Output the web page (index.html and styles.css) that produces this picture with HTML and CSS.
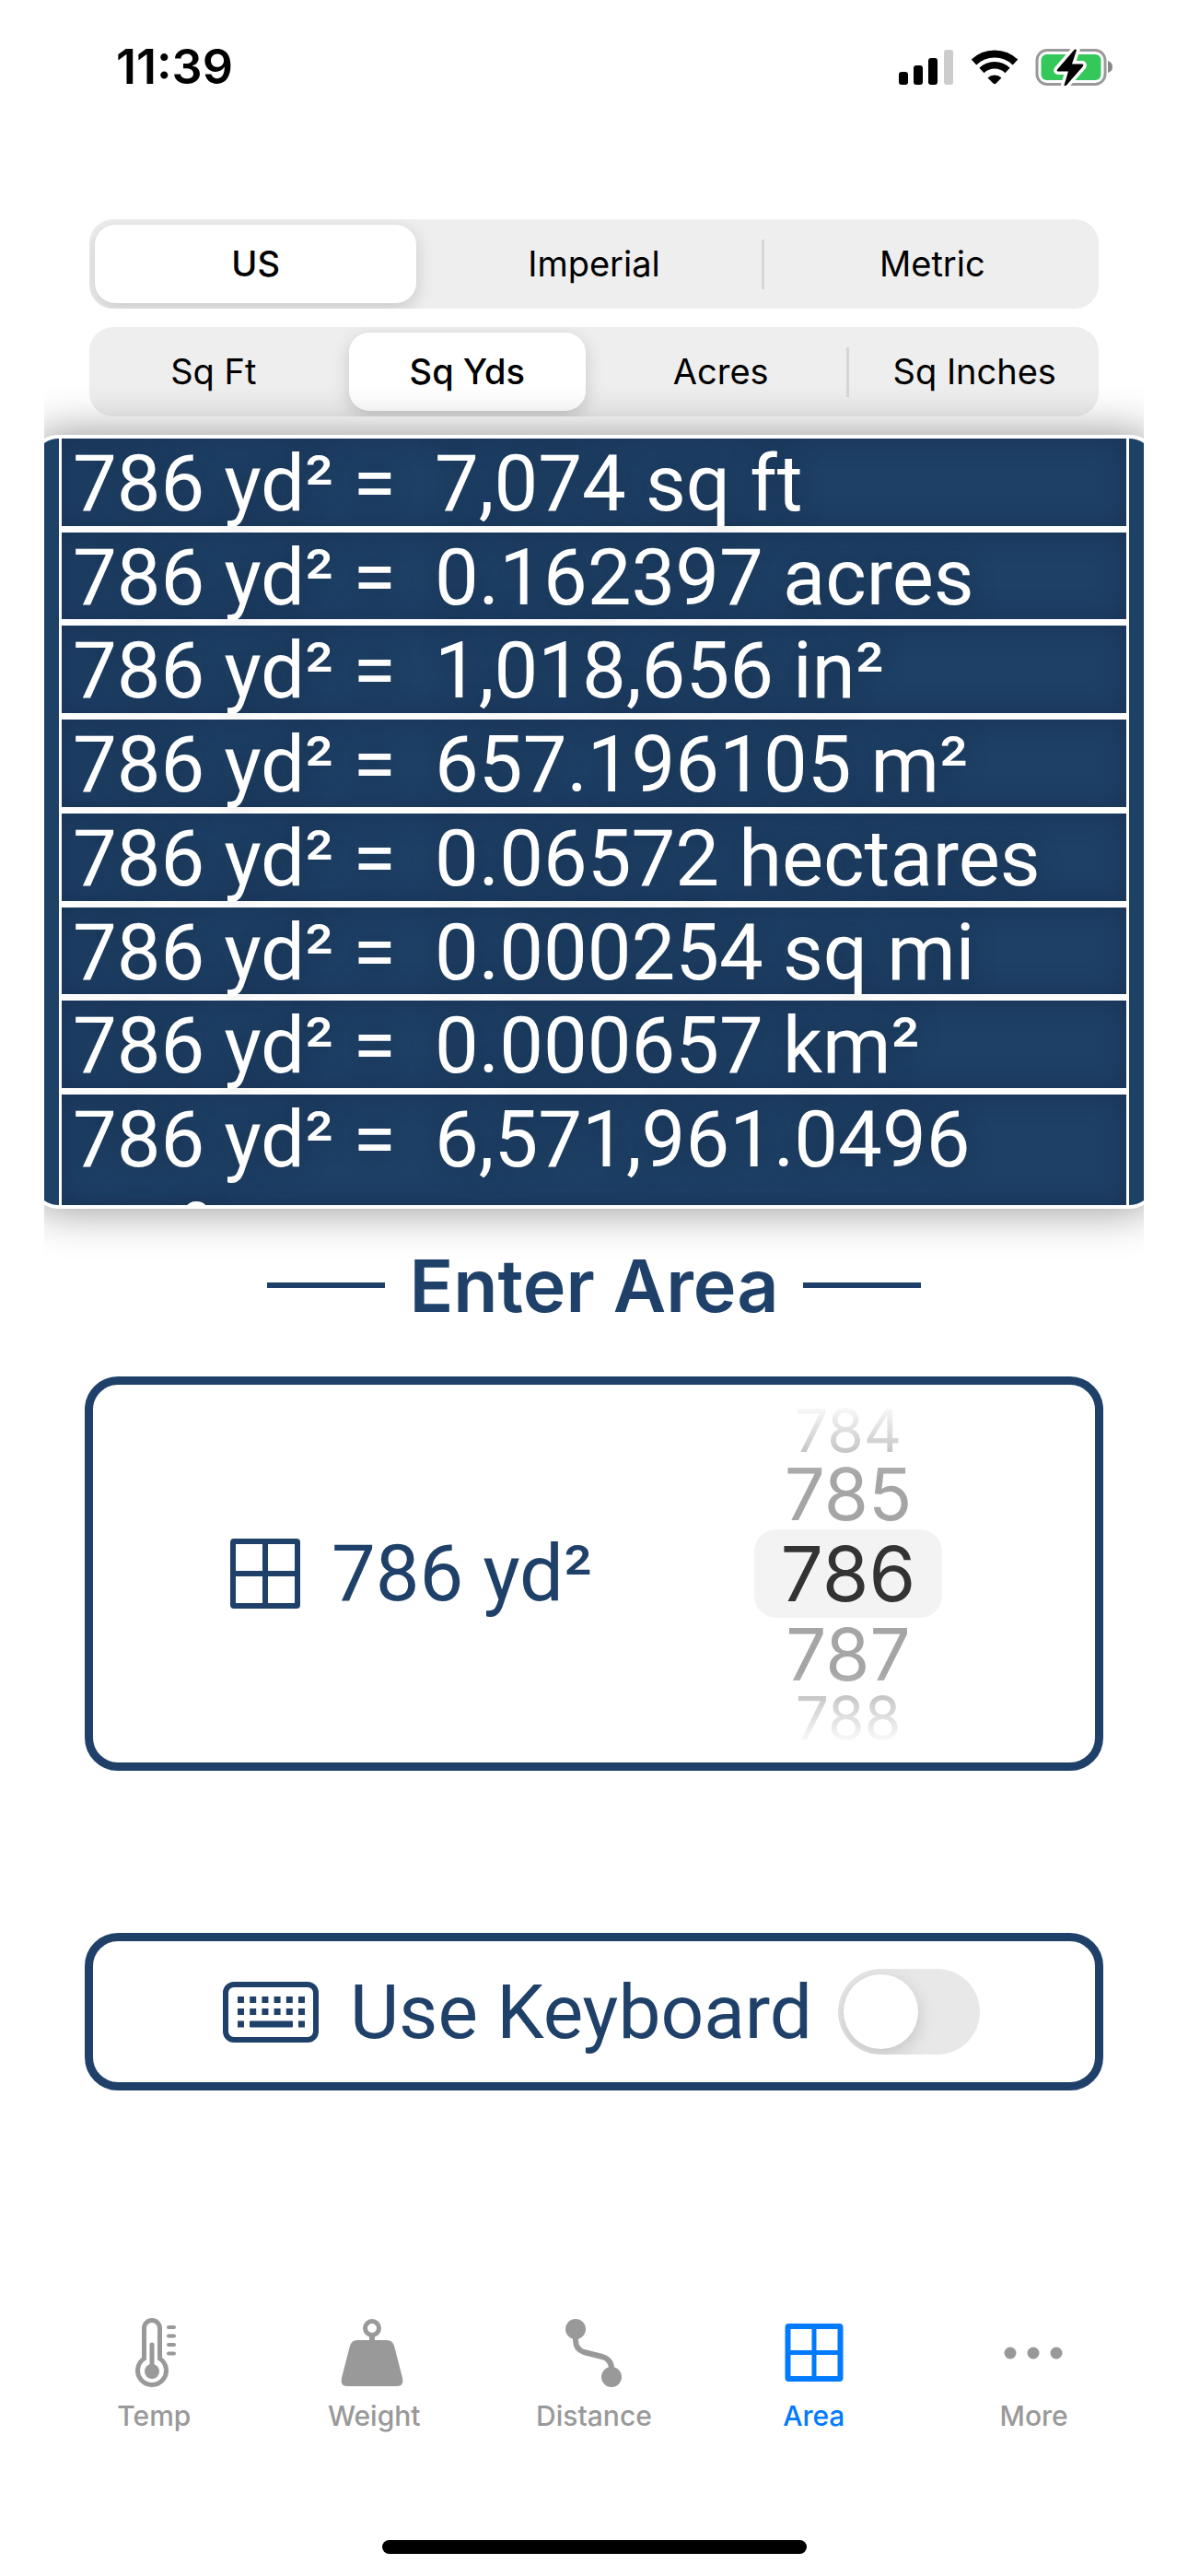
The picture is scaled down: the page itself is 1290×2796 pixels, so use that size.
FILE: index.html
```html
<!DOCTYPE html>
<html lang="en">
<head>
    <meta charset="UTF-8">
    <meta name="viewport" content="width=device-width, initial-scale=1.0">
    <title>Area Converter</title>
    <link rel="stylesheet" href="styles.css">
</head>

<body>

    <header class="status-bar">
        <span class="time">11:39</span>
        <div class="status-icons">
            <svg width="60" height="40" viewBox="0 0 60 40" aria-label="Signal">
                <rect x="0" y="25" width="10" height="14" rx="3"/>
                <rect x="16" y="18" width="10" height="21" rx="3"/>
                <rect x="32" y="10" width="10" height="29" rx="3"/>
                <rect x="49" y="1" width="10" height="38" rx="3" fill="#ccc"/>
            </svg>
            <svg width="52" height="40" viewBox="0 0 52 40" aria-label="Wi-Fi">
                <path d="M3.500 14.500a32.500 32.500 0 0 1 45 0" fill="none" stroke="#000" stroke-width="8"/>
                <path d="M12 23.500a20 20 0 0 1 28 0" fill="none" stroke="#000" stroke-width="7.500"/>
                <path d="M18.500 31.500a11 11 0 0 1 15 0l-6 6q-1.500 1.500-3 0z"/>
            </svg>
            <svg width="86" height="42" viewBox="0 0 86 42" aria-label="Battery charging">
                <rect x="2" y="2.500" width="74" height="37" rx="11" fill="none" stroke="#999" stroke-width="3"/>
                <rect x="6.500" y="7" width="65" height="28" rx="6" fill="#34c759"/>
                <path d="M79 14q5 1.500 5 6.500t-5 6.500z" fill="#888"/>
                <path d="M42.500 2 24 23.500q-1 2 1 2h11l-4.500 15q1 1.500 2.500 0L52 20q1-2-1-2.500H40L45 2.500q-1-1.500-2.500-.500z" stroke="#fff" stroke-width="7" paint-order="stroke"/>
            </svg>
        </div>
    </header>

    <main>
        <form id="areaForm" class="area-form">

            <div class="segmented" role="radiogroup" aria-label="System">
                <label><input type="radio" name="system" value="us" checked>US</label>
                <label><input type="radio" name="system" value="imperial">Imperial</label>
                <label><input type="radio" name="system" value="metric">Metric</label>
            </div>

            <div class="segmented" role="radiogroup" aria-label="Unit">
                <label><input type="radio" name="unit" value="sqft">Sq Ft</label>
                <label><input type="radio" name="unit" value="sqyd" checked>Sq Yds</label>
                <label><input type="radio" name="unit" value="acre">Acres</label>
                <label><input type="radio" name="unit" value="sqin">Sq Inches</label>
            </div>

            <div class="results">
                <div class="results-card">
                    <ul class="results-list">
                        <li>786 yd² =&nbsp; 7,074 sq ft</li>
                        <li>786 yd² =&nbsp; 0.162397 acres</li>
                        <li>786 yd² =&nbsp; 1,018,656 in²</li>
                        <li>786 yd² =&nbsp; 657.196105 m²</li>
                        <li>786 yd² =&nbsp; 0.06572 hectares</li>
                        <li>786 yd² =&nbsp; 0.000254 sq mi</li>
                        <li>786 yd² =&nbsp; 0.000657 km²</li>
                        <li>786 yd² =&nbsp; 6,571,961.0496 cm²</li>
                    </ul>
                </div>
            </div>

            <h1>Enter Area</h1>

            <div class="box box-picker">
                <label for="amount">
                    <svg width="76" height="76" viewBox="0 0 76 76" fill="none" stroke="currentColor" stroke-width="6" aria-hidden="true">
                        <rect x="3" y="3" width="70" height="70" rx="1"/>
                        <path d="M38 3v70M3 38h70"/>
                    </svg>
                    786 yd²
                </label>
                <select id="amount" name="amount" size="5">
                    <option class="far">784</option>
                    <option class="near">785</option>
                    <option selected>786</option>
                    <option class="near">787</option>
                    <option class="far">788</option>
                </select>
            </div>

            <div class="box box-keyboard">
                <label for="useKeyboard">
                    <svg width="104" height="66" viewBox="0 0 104 66" fill="currentColor" aria-hidden="true">
                        <rect x="3" y="3" width="98" height="60" rx="9" fill="none" stroke="currentColor" stroke-width="6"/>
                        <path d="M19.500 16v7M32.700 16v7M45.900 16v7M59.100 16v7M72.300 16v7M85.500 16v7M19.500 29v7M32.700 29v7M45.900 29v7M59.100 29v7M72.300 29v7M85.500 29v7M19.500 42.500v7M85.500 42.500v7" stroke="currentColor" stroke-width="7"/>
                        <rect x="29" y="42.500" width="47" height="7" rx="1"/>
                    </svg>
                    Use Keyboard
                </label>
                <input type="checkbox" role="switch" id="useKeyboard" name="useKeyboard" class="switch">
            </div>

        </form>
    </main>

    <nav class="tab-bar">
        <a href="#temp">
            <svg width="80" height="80" viewBox="0 0 80 80" fill="none" stroke="currentColor" stroke-width="5" stroke-linecap="round" aria-hidden="true">
                <path d="M29.500 46V13a8.500 8.500 0 0 1 17 0V46a15.500 15.500 0 1 1-17 0z"/>
                <path d="M38 31v28"/>
                <circle cx="38" cy="60" r="8" fill="currentColor" stroke="none"/>
                <path d="M56 12h6M56 21.500h6M56 31h6M56 40.500h6" stroke-width="4"/>
            </svg>
            Temp
        </a>
        <a href="#weight">
            <svg width="80" height="80" viewBox="0 0 80 80" fill="currentColor" aria-hidden="true">
                <circle cx="38" cy="13" r="7.500" fill="none" stroke="currentColor" stroke-width="5"/>
                <path d="M35 20h6v8h-6z"/>
                <path d="M22 26h32q6 0 8 6l9 35q2 9-6 9H11q-8 0-6-9l9-35q2-6 8-6z"/>
            </svg>
            Weight
        </a>
        <a href="#distance">
            <svg width="80" height="80" viewBox="0 0 80 80" fill="currentColor" aria-hidden="true">
                <circle cx="20" cy="14" r="11"/>
                <circle cx="59" cy="66" r="11"/>
                <path d="M20 23v3q0 10 9 13l20 5q10 3 10 13v3" fill="none" stroke="currentColor" stroke-width="6"/>
            </svg>
            Distance
        </a>
        <a href="#area" class="active" aria-current="page">
            <svg width="80" height="80" viewBox="0 0 80 80" fill="none" stroke="currentColor" stroke-width="6" aria-hidden="true">
                <rect x="11.500" y="11" width="57" height="57" rx="1"/>
                <path d="M40 11v58M11 39.500h58" stroke-width="5"/>
            </svg>
            Area
        </a>
        <a href="#more">
            <svg width="80" height="80" viewBox="0 0 80 80" fill="currentColor" aria-hidden="true">
                <circle cx="14" cy="40" r="6.500"/>
                <circle cx="39" cy="40" r="6.500"/>
                <circle cx="64" cy="40" r="6.500"/>
            </svg>
            More
        </a>
    </nav>

    <div class="home-indicator"></div>

</body>
</html>
```
FILE: styles.css
```css
* {
    box-sizing: border-box;
}
body {
    font-family: Inter, "Liberation Sans", sans-serif;
    background-color: #ffffff;
    color: #000;
    display: flex;
    flex-direction: column;
    min-height: 100vh;
    margin: 0;
}
svg {
    flex: none;
}

/* status bar */
.status-bar {
    display: flex;
    justify-content: space-between;
    align-items: center;
    padding: 42px 80px 0 126px;
}
.time {
    font-size: 52px;
    line-height: 62px;
    font-weight: 600;
}
.status-icons {
    display: flex;
    align-items: center;
    gap: 18px;
}

/* unit pickers */
.segmented {
    display: flex;
    gap: 18px;
    margin: 0 97px 20px;
    padding: 6px;
    background-color: #eeeeee;
    border-radius: 26px;
    overflow: hidden;
}
.segmented label {
    position: relative;
    flex: 1 1 0;
    height: 85px;
    line-height: 84px;
    border-radius: 22px;
    text-align: center;
    font-size: 38px;
    white-space: nowrap;
    cursor: pointer;
}
.segmented label:has(:checked) {
    background-color: #fff;
    font-weight: 500;
    box-shadow: 0 6px 20px rgba(0, 0, 0, 0.16);
}
.segmented label:not(:has(:checked)) + label:not(:has(:checked))::before {
    content: "";
    position: absolute;
    left: -11px;
    top: 16px;
    width: 3px;
    height: 54px;
    background-color: #d6d6d6;
}
.segmented input {
    position: absolute;
    appearance: none;
    margin: 0;
}
.area-form {
    padding-top: 134px;
}

.results {
    margin: 0 48px;
    clip-path: inset(-100px 0);
}
.results-card {
    position: relative;
    margin: 0 -16px;
    padding: 0 28px;
    background-color: #1e4166;
    border: 4px solid #fff;
    border-radius: 32px;
    box-shadow: 0 0 50px rgba(0, 0, 0, 0.44);
}
.results-list {
    display: grid;
    grid-template-rows: repeat(7, 1fr) 120px;
    height: 832px;
    margin: 0;
    padding: 0;
    border: solid #fff;
    border-width: 0 3px;
    list-style: none;
    overflow: hidden;
}
.results-list li {
    min-height: 0;
    padding: 0 12px;
    border-bottom: 7px solid #fff;
    background-color: #1e4066;
    box-shadow: inset 0 0 30px rgba(20, 30, 60, 0.4);
    color: #fff;
    font-family: Roboto, "Liberation Sans", sans-serif;
    font-size: 85px;
    line-height: 98px;
    text-shadow: 0 0 30px rgba(0, 0, 0, 0.3);
}
.results-list li:last-child {
    border-bottom: none;
}

h1 {
    display: flex;
    justify-content: center;
    align-items: center;
    gap: 26px;
    margin: 33px 0 49px;
    color: #1f4169;
    font-size: 79px;
    line-height: 100px;
    font-weight: 600;
}
h1::before,
h1::after {
    content: "";
    width: 128px;
    height: 6px;
    background-color: #1f4169;
}

/* outlined boxes */
.box {
    display: flex;
    align-items: center;
    margin: 0 92px;
    border: 9px solid #1f4169;
    border-radius: 36px;
    color: #1f4169;
    font-family: Roboto, "Liberation Sans", sans-serif;
    font-size: 85px;
    line-height: 100px;
}
.box label {
    display: flex;
    align-items: center;
    gap: 34px;
    white-space: nowrap;
}
.box-picker {
    justify-content: space-between;
    height: 428px;
    padding: 0 166px 0 149px;
}
.box-picker select {
    width: 204px;
    height: 372px;
    padding: 0;
    border: none;
    outline: none;
    appearance: none;
    background: none;
    font-family: Inter, "Liberation Sans", sans-serif;
    font-size: 82px;
    color: #333;
    text-align: center;
    overflow: hidden;
    scrollbar-width: none;
    mask-image: linear-gradient(transparent, #000 80px, #000 292px, transparent);
}
.box-picker option {
    display: flex;
    justify-content: center;
    align-items: center;
    height: 96px;
    min-height: 0;
    padding: 0;
    border-radius: 24px;
    line-height: 96px;
}
.box-picker option:checked {
    background: #f3f3f3;
    color: #333;
}
.box-picker .near {
    height: 78px;
    color: #a5a5a5;
    font-size: 78px;
    line-height: 78px;
}
.box-picker .far {
    height: 60px;
    color: #aaa;
    font-size: 64px;
    line-height: 60px;
}
.box-keyboard {
    justify-content: center;
    gap: 28px;
    height: 171px;
    margin-top: 176px;
    padding-left: 16px;
    font-size: 82px;
}
.switch {
    position: relative;
    appearance: none;
    width: 154px;
    height: 93px;
    margin: 0;
    border-radius: 47px;
    background-color: #e8e8e8;
    overflow: hidden;
    cursor: pointer;
}
.switch::before {
    content: "";
    position: absolute;
    left: 6px;
    top: 6px;
    width: 81px;
    height: 81px;
    border-radius: 50%;
    background-color: #fff;
    box-shadow: 0 6px 20px rgba(0, 0, 0, 0.16);
}
.switch:checked {
    background-color: #34c759;
}
.switch:checked::before {
    left: 67px;
}

/* bottom tabs */
.tab-bar {
    display: flex;
    margin-top: auto;
    padding: 0 48px;
}
.tab-bar a {
    flex: 1 1 0;
    display: flex;
    flex-direction: column;
    align-items: center;
    gap: 10px;
    color: #999;
    font-size: 30px;
    line-height: 36px;
    font-weight: 500;
    text-decoration: none;
}
.tab-bar a.active {
    color: #007aff;
}
.home-indicator {
    width: 461px;
    height: 15px;
    margin: 117px auto 24px;
    border-radius: 8px;
    background-color: #000;
}
```
